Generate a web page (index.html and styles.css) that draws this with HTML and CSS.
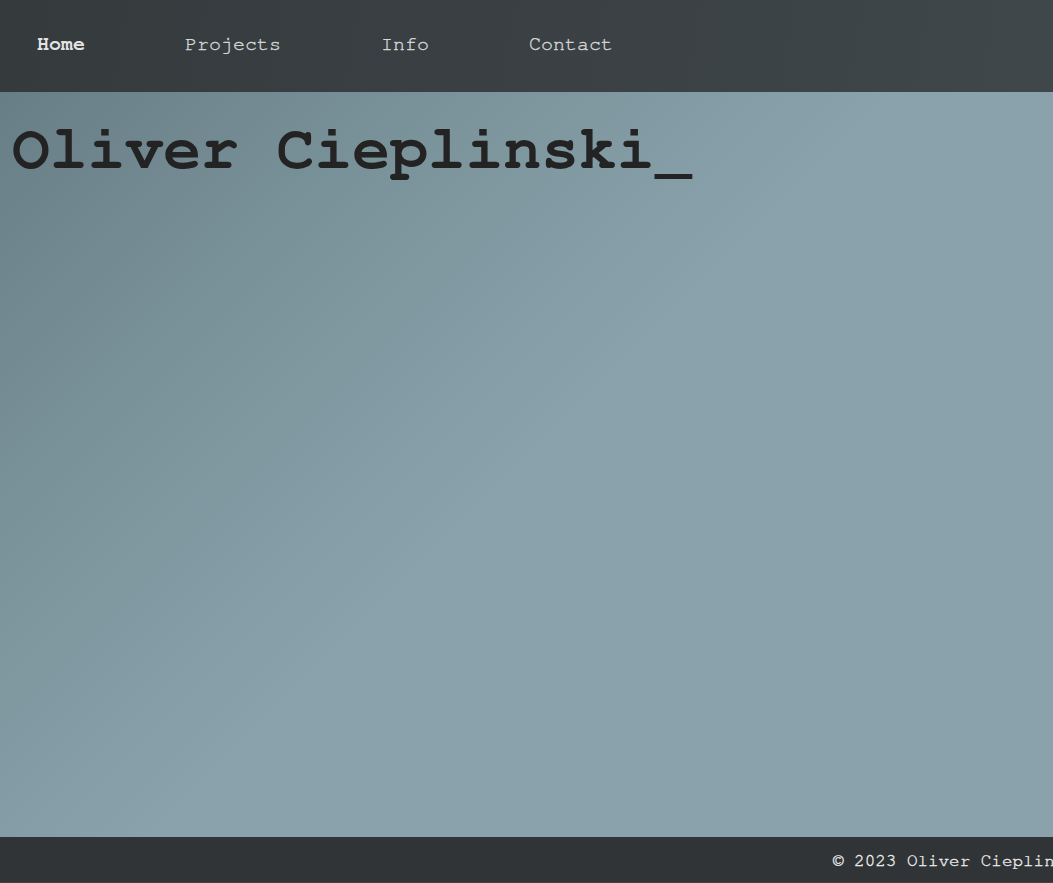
FILE: index.html
```html
<!DOCTYPE html>
<html lang="en">
<head>
<meta charset="utf-8">
<title>Oliver Cieplinski</title>
<link rel="stylesheet" href="styles.css">
</head>
<body>
<div class="page">
  <header class="topbar">
    <nav class="nav">
      <a class="nav-link active" href="#">Home</a>
      <a class="nav-link" href="#">Projects</a>
      <a class="nav-link" href="#">Info</a>
      <a class="nav-link" href="#">Contact</a>
    </nav>
  </header>
  <main class="hero">
    <h1 class="title">Oliver Cieplinski_</h1>
  </main>
  <footer class="footer">
    <p class="copy">© 2023 Oliver Cieplinski</p>
  </footer>
</div>
</body>
</html>
```

FILE: styles.css
```css
html, body {
  margin: 0;
  padding: 0;
  height: 100%;
}
body {
  background: #4a4038;
  font-family: "Nimbus Mono PS", "Nimbus Mono L", "FreeMono", "Courier 10 Pitch", "Liberation Mono", monospace;
  overflow: hidden;
}
.page {
  display: flex;
  flex-direction: column;
  height: 882px;
}
.topbar {
  height: 92px;
  flex: none;
  background: linear-gradient(100deg, #353a3d 0%, #3a4043 50%, #3f474a 100%);
  display: flex;
  align-items: center;
}
.nav {
  display: flex;
  gap: 100px;
  padding-left: 37px;
  padding-bottom: 5px;
}
.nav-link {
  font-size: 20px;
  color: #d6d8d8;
  text-decoration: none;
  line-height: 1;
  -webkit-text-stroke: 0.35px currentColor;
}
.nav-link.active {
  font-weight: bold;
  color: #e2e4e4;
  -webkit-text-stroke: 0;
}
.hero {
  flex: 1;
  background: linear-gradient(135deg, #687e86 0%, #7a929a 25%, #8aa2ab 50%, #8aa2ab 100%);
  padding: 0 0 0 12px;
}
.title {
  margin: 0;
  padding-top: 22px;
  font-size: 63px;
  line-height: 72px;
  font-weight: bold;
  color: #232323;
  white-space: nowrap;
}
.footer {
  height: 45px;
  flex: none;
  background: #303436;
  display: flex;
  align-items: center;
  overflow: hidden;
}
.copy {
  margin: 0;
  padding-left: 833px;
  padding-top: 4px;
  font-size: 17.6px;
  color: #eeeeee;
  white-space: nowrap;
  line-height: 1;
  -webkit-text-stroke: 0.35px currentColor;
}
```
